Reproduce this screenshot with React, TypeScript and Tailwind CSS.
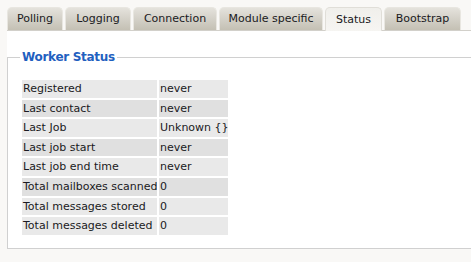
import React from "react";

const tabs = [
  { label: "Polling", w: "w-[56px]" },
  { label: "Logging", w: "w-[66px]" },
  { label: "Connection", w: "w-[84px]" },
  { label: "Module specific", w: "w-[104px]" },
  { label: "Status", w: "w-[57px]", active: true },
  { label: "Bootstrap", w: "w-[77px]" },
];

const rows: [string, string, boolean][] = [
  ["Registered", "never", false],
  ["Last contact", "never", true],
  ["Last Job", "Unknown {}", false],
  ["Last job start", "never", true],
  ["Last job end time", "never", false],
  ["Total mailboxes scanned", "0", true],
  ["Total messages stored", "0", false],
  ["Total messages deleted", "0", false],
];

export default function App() {
  return (
    <div className="w-[471px] h-[262px] overflow-hidden bg-[#f9f8f6] font-['DejaVu_Sans',sans-serif] text-[11px] text-[#1a1a22]">
      <div className="pt-[7px] pl-[7px]">
        <div className="flex gap-[2px] h-[23px] items-end">
          {tabs.map((t) =>
            t.active ? (
              <div
                key={t.label}
                className={`${t.w} h-[24px] -mb-px pt-px relative z-10 flex items-center justify-center rounded-t-[5px] border border-b-0 border-[#e0ded8] bg-gradient-to-b from-[#f0efeb] to-[#f6f5f2]`}
              >
                {t.label}
              </div>
            ) : (
              <div
                key={t.label}
                className={`${t.w} h-[23px] pt-px flex items-center justify-center rounded-t-[5px] border border-b-0 border-[#e8e6e0] bg-gradient-to-b from-[#e4e2dc] to-[#c4c0b4]`}
              >
                {t.label}
              </div>
            )
          )}
        </div>
        <div className="w-[480px] h-[218px] bg-white border-t border-[#d2d0ca] pt-[19px]">
          <fieldset className="m-0 border border-[#d0d0d0] px-[12px] pt-[13px] pb-[11px] min-w-0">
            <legend className="px-[2px] text-[12px] tracking-[-0.3px] leading-[15px] font-bold text-[#1f60c0]">
              Worker Status
            </legend>
            <table className="table-fixed w-[210px] border-separate border-spacing-[2px]">
              <tbody>
                {rows.map(([k, v, dark]) => (
                  <tr key={k} className={dark ? "bg-[#e0e0e0]" : "bg-[#e9e9e9]"}>
                    <td className="w-[135px] p-0 pl-px h-[17.6px] leading-[17.6px] whitespace-nowrap overflow-hidden">
                      {k}
                    </td>
                    <td className="w-[69px] p-0 pl-px h-[17.6px] leading-[17.6px] whitespace-nowrap overflow-hidden">
                      {v}
                    </td>
                  </tr>
                ))}
              </tbody>
            </table>
          </fieldset>
        </div>
      </div>
    </div>
  );
}
